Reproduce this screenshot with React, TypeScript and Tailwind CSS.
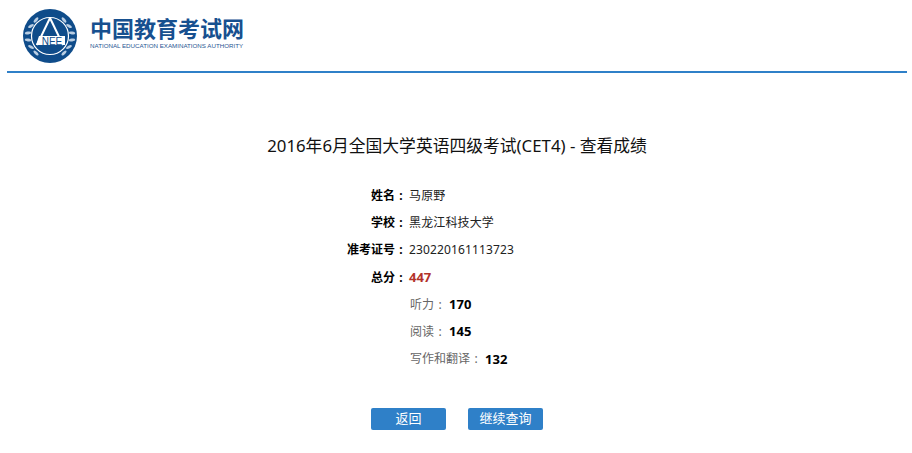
const font = {
  fontFamily: '"Noto Sans", "Noto Sans CJK SC", sans-serif',
};

const rows = [
  { label: '姓名', value: '马原野' },
  { label: '学校', value: '黑龙江科技大学' },
  { label: '准考证号', value: '230220161113723' },
];

const subScores = [
  { label: '听力', value: '170' },
  { label: '阅读', value: '145' },
  { label: '写作和翻译', value: '132' },
];

const leaves = [
  [13, 44, -45], [8, 38, -62], [5, 31, -80], [5, 24, -100], [8, 17, -120], [13, 11, -140],
  [41, 44, 45], [46, 38, 62], [49, 31, 80], [49, 24, 100], [46, 17, 120], [41, 11, 140],
];

function Emblem() {
  return (
    <svg width="54" height="54" viewBox="0 0 54 54" className="shrink-0">
      <circle cx="27" cy="27" r="27" fill="#0f4c8a" />
      {leaves.map(([x, y, r], i) => (
        <ellipse
          key={i}
          cx={x}
          cy={y}
          rx="1.4"
          ry="3.2"
          fill="#b9cde2"
          transform={`rotate(${r} ${x} ${y})`}
        />
      ))}
      <circle cx="27" cy="27" r="18.5" fill="none" stroke="#ffffff" strokeWidth="1.2" />
      <path d="M27 9 L14 36 M27 9 L40 36" stroke="#ffffff" strokeWidth="2" fill="none" />
      <path d="M16 27 H42 V36 H13 Z" fill="#ffffff" />
      <text
        x="29"
        y="35.5"
        textAnchor="middle"
        fontSize="10"
        fill="#0f4c8a"
        fontFamily="Liberation Sans"
      >
        NEE
      </text>
    </svg>
  );
}

function Header() {
  return (
    <div className="flex h-[71px] items-center pl-[23px] pt-[1px]">
      <Emblem />
      <div className="ml-[13px] flex flex-col pb-[5px]">
        <div className="text-[22px] leading-[22px] font-bold text-[#17508f]">
          中国教育考试网
        </div>
        <div className="mt-[3px] font-['Liberation_Sans'] text-[6.2px] leading-[8px] whitespace-nowrap text-[#1f5592]">
          NATIONAL EDUCATION EXAMINATIONS AUTHORITY
        </div>
      </div>
    </div>
  );
}

function Colon() {
  return <span className="inline-block w-[12px] text-center font-bold">:</span>;
}

export default function App() {
  return (
    <div style={font} className="h-[453px] w-[912px] overflow-hidden bg-white">
      <Header />
      <div className="ml-[7px] h-[2px] w-[900px] bg-[#2f80c8]" />

      <h1 className="mt-[60px] ml-[7px] w-[900px] text-center text-[16.8px] leading-[26px] text-[#111111]">
        2016年6月全国大学英语四级考试(CET4) - 查看成绩
      </h1>

      <div className="mt-[23px] flex flex-col text-[12px] text-[#222222]">
        {rows.map(row => (
          <div key={row.label} className="flex h-[27.3px] items-center">
            <div className="w-[407px] text-right font-bold text-black">
              {row.label}
              <Colon />
            </div>
            <div className="ml-[2px] tracking-[0.13px]">{row.value}</div>
          </div>
        ))}
        <div className="flex h-[27.3px] items-center">
          <div className="w-[407px] text-right font-bold text-black">
            总分
            <Colon />
          </div>
          <div className="ml-[2px] text-[13px] font-bold text-[#b3322a]">447</div>
        </div>
        {subScores.map(score => (
          <div key={score.label} className="flex h-[27.3px] items-center pl-[410px]">
            <span className="text-[#666666]">
              {score.label}
              <span className="inline-block w-[12px] text-center">:</span>
            </span>
            <span className="ml-[3px] text-[13px] font-bold text-black">{score.value}</span>
          </div>
        ))}
      </div>

      <div className="mt-[35px] flex gap-[22px] pl-[371px]">
        <button className="h-[22px] w-[75px] rounded-[2px] bg-[#2f80c8] text-[13px] text-white">
          返回
        </button>
        <button className="h-[22px] w-[75px] rounded-[2px] bg-[#2f80c8] text-[13px] text-white">
          继续查询
        </button>
      </div>
    </div>
  );
}
